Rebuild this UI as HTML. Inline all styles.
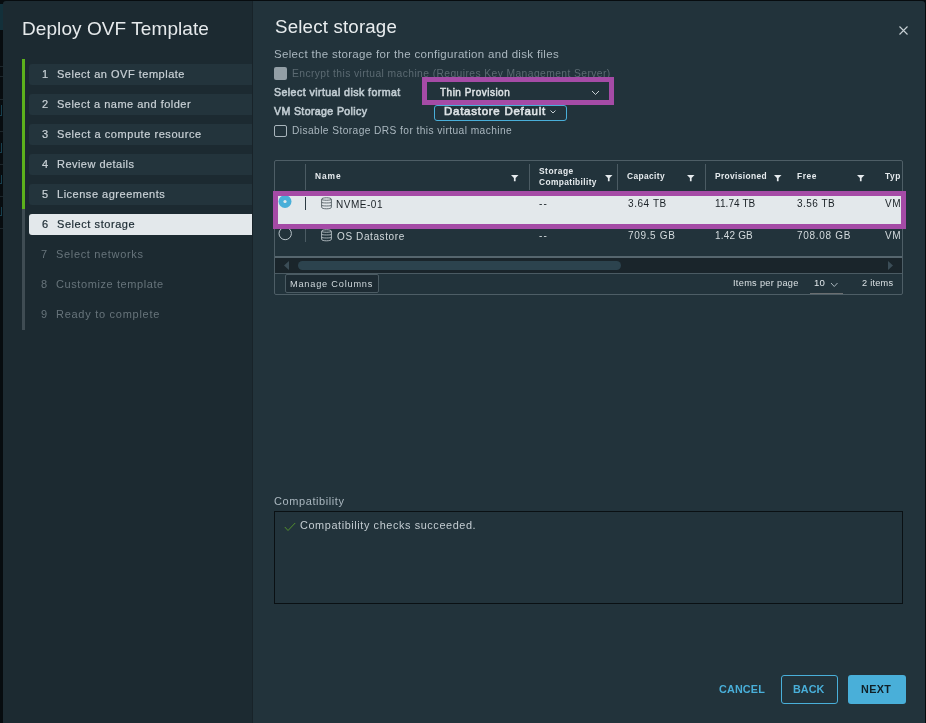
<!DOCTYPE html>
<html><head><meta charset="utf-8"><style>
html,body{margin:0;padding:0;}
body{width:926px;height:723px;overflow:hidden;background:#070c0f;position:relative;font-family:"Liberation Sans",sans-serif;}
.t{position:absolute;white-space:nowrap;line-height:1;will-change:transform;}
.r{position:absolute;}
svg.r{overflow:visible;}
</style></head><body>
<div class="r" style="left:0px;top:4px;width:3px;height:26px;background:#13303a"></div>
<div class="r" style="left:0px;top:66px;width:3px;height:1px;background:#1c262b"></div>
<div class="r" style="left:0px;top:76px;width:3px;height:1px;background:#1c262b"></div>
<div class="r" style="left:0px;top:99px;width:3px;height:1px;background:#1c262b"></div>
<div class="r" style="left:0px;top:131px;width:3px;height:1px;background:#1c262b"></div>
<div class="r" style="left:0px;top:164px;width:3px;height:1px;background:#1c262b"></div>
<div class="r" style="left:0px;top:196px;width:3px;height:1px;background:#1c262b"></div>
<div class="r" style="left:0px;top:228px;width:3px;height:1px;background:#1c262b"></div>
<div class="r" style="left:0px;top:115px;width:2px;height:1px;background:#173f4e"></div>
<div class="r" style="left:1px;top:105px;width:1px;height:11px;background:#173f4e"></div>
<div class="r" style="left:0px;top:152px;width:2px;height:1px;background:#173f4e"></div>
<div class="r" style="left:1px;top:143px;width:1px;height:10px;background:#173f4e"></div>
<div class="r" style="left:0px;top:183px;width:2px;height:1px;background:#173f4e"></div>
<div class="r" style="left:1px;top:175px;width:1px;height:9px;background:#173f4e"></div>
<div class="r" style="left:0px;top:215px;width:2px;height:1px;background:#173f4e"></div>
<div class="r" style="left:1px;top:207px;width:1px;height:9px;background:#173f4e"></div>
<div class="r" style="left:3px;top:1px;width:250px;height:722px;background:#1c2a31;border-top-left-radius:3px"></div>
<div class="r" style="left:252px;top:1px;width:1px;height:722px;background:#182329"></div>
<div class="r" style="left:253px;top:1px;width:672px;height:722px;background:#22333b;border-top-right-radius:3px"></div>
<div class="t" style="left:22.20px;top:19px;font-size:19px;color:#e6eaec;font-weight:normal;letter-spacing:0.078px;">Deploy OVF Template</div>
<div class="r" style="left:22px;top:59px;width:3px;height:150px;background:#5cb11c"></div>
<div class="r" style="left:22px;top:209px;width:3px;height:121px;background:#3f4c53"></div>
<div class="r" style="left:29px;top:64px;width:223px;height:21px;background:#23343c;border-radius:3px 0 0 3px"></div>
<div class="t" style="left:41.58px;top:69px;font-size:11px;color:#c9d1d6;font-weight:normal;letter-spacing:0.000px;-webkit-text-stroke:0.2px #c9d1d6;">1</div>
<div class="t" style="left:56.94px;top:69px;font-size:11px;color:#c9d1d6;font-weight:normal;letter-spacing:0.508px;-webkit-text-stroke:0.2px #c9d1d6;">Select an OVF template</div>
<div class="r" style="left:29px;top:94px;width:223px;height:21px;background:#23343c;border-radius:3px 0 0 3px"></div>
<div class="t" style="left:41.82px;top:99px;font-size:11px;color:#c9d1d6;font-weight:normal;letter-spacing:0.000px;-webkit-text-stroke:0.2px #c9d1d6;">2</div>
<div class="t" style="left:56.94px;top:99px;font-size:11px;color:#c9d1d6;font-weight:normal;letter-spacing:0.492px;-webkit-text-stroke:0.2px #c9d1d6;">Select a name and folder</div>
<div class="r" style="left:29px;top:124px;width:223px;height:21px;background:#23343c;border-radius:3px 0 0 3px"></div>
<div class="t" style="left:41.77px;top:129px;font-size:11px;color:#c9d1d6;font-weight:normal;letter-spacing:0.000px;-webkit-text-stroke:0.2px #c9d1d6;">3</div>
<div class="t" style="left:56.94px;top:129px;font-size:11px;color:#c9d1d6;font-weight:normal;letter-spacing:0.553px;-webkit-text-stroke:0.2px #c9d1d6;">Select a compute resource</div>
<div class="r" style="left:29px;top:154px;width:223px;height:21px;background:#23343c;border-radius:3px 0 0 3px"></div>
<div class="t" style="left:42.07px;top:159px;font-size:11px;color:#c9d1d6;font-weight:normal;letter-spacing:0.000px;-webkit-text-stroke:0.2px #c9d1d6;">4</div>
<div class="t" style="left:56.86px;top:159px;font-size:11px;color:#c9d1d6;font-weight:normal;letter-spacing:0.466px;-webkit-text-stroke:0.2px #c9d1d6;">Review details</div>
<div class="r" style="left:29px;top:184px;width:223px;height:21px;background:#23343c;border-radius:3px 0 0 3px"></div>
<div class="t" style="left:41.83px;top:189px;font-size:11px;color:#c9d1d6;font-weight:normal;letter-spacing:0.000px;-webkit-text-stroke:0.2px #c9d1d6;">5</div>
<div class="t" style="left:56.85px;top:189px;font-size:11px;color:#c9d1d6;font-weight:normal;letter-spacing:0.515px;-webkit-text-stroke:0.2px #c9d1d6;">License agreements</div>
<div class="r" style="left:29px;top:214px;width:223px;height:21px;background:#e3e8eb;border-radius:3px 0 0 3px"></div>
<div class="t" style="left:41.80px;top:219px;font-size:11px;color:#1b2a32;font-weight:normal;letter-spacing:0.000px;-webkit-text-stroke:0.2px #1b2a32;">6</div>
<div class="t" style="left:56.94px;top:219px;font-size:11px;color:#1b2a32;font-weight:normal;letter-spacing:0.565px;-webkit-text-stroke:0.2px #1b2a32;">Select storage</div>
<div class="t" style="left:40.89px;top:249px;font-size:11px;color:#67747b;font-weight:normal;letter-spacing:0.000px;">7</div>
<div class="t" style="left:55.95px;top:249px;font-size:11px;color:#67747b;font-weight:normal;letter-spacing:0.664px;">Select networks</div>
<div class="t" style="left:41.04px;top:279px;font-size:11px;color:#67747b;font-weight:normal;letter-spacing:0.000px;">8</div>
<div class="t" style="left:56.45px;top:279px;font-size:11px;color:#67747b;font-weight:normal;letter-spacing:0.589px;">Customize template</div>
<div class="t" style="left:41.00px;top:309px;font-size:11px;color:#67747b;font-weight:normal;letter-spacing:0.000px;">9</div>
<div class="t" style="left:56.00px;top:309px;font-size:11px;color:#67747b;font-weight:normal;letter-spacing:0.726px;">Ready to complete</div>
<div class="t" style="left:274.87px;top:18px;font-size:18.7px;color:#e9edef;font-weight:normal;letter-spacing:0.182px;">Select storage</div>
<svg class="r" style="left:897px;top:24px" width="13" height="13" viewBox="0 0 13 13"><path d="M2.5 2.5 L10.5 10.5 M10.5 2.5 L2.5 10.5" stroke="#c8d0d4" stroke-width="1.1"/></svg>
<div class="t" style="left:273.77px;top:49px;font-size:11.5px;color:#aab7bf;font-weight:normal;letter-spacing:0.323px;">Select the storage for the configuration and disk files</div>
<div class="r" style="left:274px;top:67px;width:13px;height:13px;background:#939fa6;border-radius:2px"></div>
<div class="t" style="left:291.70px;top:69px;font-size:10.3px;color:#5b6a72;font-weight:normal;letter-spacing:0.410px;">Encrypt this virtual machine (Requires Key Management Server)</div>
<div class="t" style="left:274.17px;top:87px;font-size:10.6px;color:#c1ccd2;font-weight:normal;letter-spacing:0.433px;-webkit-text-stroke:0.6px #c1ccd2;">Select virtual disk format</div>
<div class="r" style="left:422px;top:77px;width:192px;height:28px;border:5px solid #a54ba6;box-sizing:border-box"></div>
<div class="t" style="left:439.66px;top:88px;font-size:10px;color:#dfe4e7;font-weight:normal;letter-spacing:0.489px;-webkit-text-stroke:0.45px #dfe4e7;">Thin Provision</div>
<svg class="r" style="left:591px;top:90px" width="9" height="6" viewBox="0 0 9 6"><path d="M1 1 L4.5 4.5 L8 1" stroke="#c8d0d4" stroke-width="1" fill="none"/></svg>
<div class="t" style="left:274.45px;top:106px;font-size:10.6px;color:#c1ccd2;font-weight:normal;letter-spacing:0.368px;-webkit-text-stroke:0.6px #c1ccd2;">VM Storage Policy</div>
<div class="r" style="left:434px;top:105px;width:133px;height:16px;border:1px solid #49afd9;border-radius:3px;box-sizing:border-box"></div>
<div class="t" style="left:444.48px;top:106px;font-size:11.5px;color:#dfe4e7;font-weight:normal;letter-spacing:0.733px;-webkit-text-stroke:0.6px #dfe4e7;">Datastore Default</div>
<svg class="r" style="left:549px;top:109px" width="9" height="6" viewBox="0 0 9 6"><path d="M1.5 1.5 L4 4 L6.5 1.5" stroke="#c8d0d4" stroke-width="1" fill="none"/></svg>
<div class="r" style="left:274px;top:125px;width:13px;height:12px;border:1px solid #a9b5bc;border-radius:2px;box-sizing:border-box"></div>
<div class="t" style="left:291.66px;top:126px;font-size:10.2px;color:#aab7bf;font-weight:normal;letter-spacing:0.421px;">Disable Storage DRS for this virtual machine</div>
<div class="r" style="left:274px;top:160px;width:629px;height:135px;border:1px solid #4e5e66;border-radius:2px;box-sizing:border-box"></div>
<div class="r" style="left:305px;top:164px;width:1px;height:26px;background:#4b5b63"></div>
<div class="r" style="left:529px;top:164px;width:1px;height:26px;background:#4b5b63"></div>
<div class="r" style="left:617px;top:164px;width:1px;height:26px;background:#4b5b63"></div>
<div class="r" style="left:705px;top:164px;width:1px;height:26px;background:#4b5b63"></div>
<div class="t" style="left:315.00px;top:172px;font-size:8.4px;color:#e6ebee;font-weight:bold;letter-spacing:0.925px;">Name</div>
<div class="t" style="left:538.72px;top:167px;font-size:8.4px;color:#e6ebee;font-weight:bold;letter-spacing:0.000px;letter-spacing:0.5px">Storage</div>
<div class="t" style="left:538.84px;top:178px;font-size:8.4px;color:#e6ebee;font-weight:bold;letter-spacing:0.368px;">Compatibility</div>
<div class="t" style="left:627.24px;top:172px;font-size:8.4px;color:#e6ebee;font-weight:bold;letter-spacing:0.375px;">Capacity</div>
<div class="t" style="left:714.90px;top:172px;font-size:8.4px;color:#e6ebee;font-weight:bold;letter-spacing:0.365px;">Provisioned</div>
<div class="t" style="left:796.60px;top:172px;font-size:8.4px;color:#e6ebee;font-weight:bold;letter-spacing:0.000px;letter-spacing:0.6px">Free</div>
<div class="t" style="left:885.42px;top:172px;font-size:8.4px;color:#e6ebee;font-weight:bold;letter-spacing:0.000px;letter-spacing:0.6px">Typ</div>
<svg class="r" style="left:510.75px;top:174.75px" width="8" height="7" viewBox="0 0 8 7"><path d="M0 0 H7.5 L4.6 3 V6.2 H2.9 V3 Z" fill="#e6ebee"/></svg>
<svg class="r" style="left:604.5px;top:174.75px" width="8" height="7" viewBox="0 0 8 7"><path d="M0 0 H7.5 L4.6 3 V6.2 H2.9 V3 Z" fill="#e6ebee"/></svg>
<svg class="r" style="left:687px;top:174.75px" width="8" height="7" viewBox="0 0 8 7"><path d="M0 0 H7.5 L4.6 3 V6.2 H2.9 V3 Z" fill="#e6ebee"/></svg>
<svg class="r" style="left:774px;top:174.75px" width="8" height="7" viewBox="0 0 8 7"><path d="M0 0 H7.5 L4.6 3 V6.2 H2.9 V3 Z" fill="#e6ebee"/></svg>
<svg class="r" style="left:857px;top:174.75px" width="8" height="7" viewBox="0 0 8 7"><path d="M0 0 H7.5 L4.6 3 V6.2 H2.9 V3 Z" fill="#e6ebee"/></svg>
<div class="r" style="left:278px;top:196px;width:623px;height:28px;background:#e3e8eb"></div>
<div class="r" style="left:273px;top:191px;width:633px;height:38px;border:5px solid #a54ba6;box-sizing:border-box"></div>
<svg class="r" style="left:278px;top:195px" width="14" height="14" viewBox="0 0 14 14"><circle cx="7" cy="6.5" r="6.5" fill="#49afd9"/><circle cx="7" cy="6.5" r="1.6" fill="#e3e8eb"/></svg>
<div class="r" style="left:305px;top:197px;width:1px;height:13px;background:#2b3a42"></div>
<svg class="r" style="left:320.5px;top:196.5px" width="11" height="13" viewBox="0 0 11 13"><path d="M0.6 2.2 C0.6 0.3 10.4 0.3 10.4 2.2 V10.3 C10.4 12.3 0.6 12.3 0.6 10.3 Z M0.6 2.2 C0.6 3.6 10.4 3.6 10.4 2.2 M0.6 5.3 C0.6 6.2 10.4 6.2 10.4 5.3 M0.6 8.3 C0.6 9.2 10.4 9.2 10.4 8.3" fill="none" stroke="#4a555b" stroke-width="0.85"/></svg>
<div class="t" style="left:335.99px;top:200px;font-size:10px;color:#1a2126;font-weight:normal;letter-spacing:0.523px;">NVME-01</div>
<div class="t" style="left:538.55px;top:199px;font-size:10px;color:#1a2126;font-weight:normal;letter-spacing:0.000px;letter-spacing:1.2px">--</div>
<div class="t" style="left:627.79px;top:199px;font-size:10px;color:#1a2126;font-weight:normal;letter-spacing:0.570px;">3.64 TB</div>
<div class="t" style="left:715.00px;top:199px;font-size:10px;color:#1a2126;font-weight:normal;letter-spacing:0.087px;">11.74 TB</div>
<div class="t" style="left:797.29px;top:199px;font-size:10px;color:#1a2126;font-weight:normal;letter-spacing:0.470px;">3.56 TB</div>
<div class="t" style="left:885.31px;top:199px;font-size:10px;color:#1a2126;font-weight:normal;letter-spacing:0.000px;letter-spacing:0.5px">VM</div>
<svg class="r" style="left:278px;top:228px" width="14" height="14" viewBox="0 0 14 14"><circle cx="7.2" cy="5.5" r="6.2" fill="none" stroke="#b9c4ca" stroke-width="1"/></svg>
<div class="r" style="left:305px;top:229px;width:1px;height:13px;background:#4b5b63"></div>
<svg class="r" style="left:320.5px;top:229px" width="11" height="13" viewBox="0 0 11 13"><path d="M0.6 2.2 C0.6 0.3 10.4 0.3 10.4 2.2 V10.3 C10.4 12.3 0.6 12.3 0.6 10.3 Z M0.6 2.2 C0.6 3.6 10.4 3.6 10.4 2.2 M0.6 5.3 C0.6 6.2 10.4 6.2 10.4 5.3 M0.6 8.3 C0.6 9.2 10.4 9.2 10.4 8.3" fill="none" stroke="#c0c9ce" stroke-width="0.85"/></svg>
<div class="t" style="left:336.55px;top:232px;font-size:10px;color:#d3dadd;font-weight:normal;letter-spacing:0.607px;">OS Datastore</div>
<div class="t" style="left:538.55px;top:231px;font-size:10px;color:#d3dadd;font-weight:normal;letter-spacing:0.000px;letter-spacing:1.2px">--</div>
<div class="t" style="left:627.73px;top:231px;font-size:10px;color:#d3dadd;font-weight:normal;letter-spacing:0.662px;">709.5 GB</div>
<div class="t" style="left:715.00px;top:231px;font-size:10px;color:#d3dadd;font-weight:normal;letter-spacing:0.184px;">1.42 GB</div>
<div class="t" style="left:797.23px;top:231px;font-size:10px;color:#d3dadd;font-weight:normal;letter-spacing:0.710px;">708.08 GB</div>
<div class="t" style="left:885.31px;top:231px;font-size:10px;color:#d3dadd;font-weight:normal;letter-spacing:0.000px;letter-spacing:0.5px">VM</div>
<div class="r" style="left:903px;top:161px;width:22px;height:95px;background:#22333b"></div>
<div class="r" style="left:273px;top:191px;width:633px;height:38px;border:5px solid #a54ba6;box-sizing:border-box;"></div>
<div class="r" style="left:275px;top:256px;width:627px;height:2px;background:#56666e"></div>
<div class="r" style="left:275px;top:258px;width:627px;height:15px;background:#1a252b"></div>
<div class="r" style="left:275px;top:273px;width:627px;height:1px;background:#4b5b63"></div>
<svg class="r" style="left:283px;top:261px" width="7" height="10" viewBox="0 0 7 10"><path d="M6 0 V9 L1 4.5 Z" fill="#3b4d57"/></svg>
<svg class="r" style="left:888px;top:261px" width="7" height="10" viewBox="0 0 7 10"><path d="M0 0 V9 L5 4.5 Z" fill="#3b4d57"/></svg>
<div class="r" style="left:298px;top:261px;width:323px;height:9px;background:#2c434e;border-radius:5px"></div>
<div class="r" style="left:285px;top:274px;width:94px;height:19px;background:#1d2b33;border:1px solid #4b5b63;border-radius:2px;box-sizing:border-box"></div>
<div class="t" style="left:290.31px;top:280px;font-size:9.2px;color:#cfd7db;font-weight:normal;letter-spacing:0.795px;">Manage Columns</div>
<div class="t" style="left:732.54px;top:279px;font-size:9.2px;color:#d9e0e3;font-weight:normal;letter-spacing:0.313px;">Items per page</div>
<div class="t" style="left:813.86px;top:278px;font-size:9.6px;color:#e0e6e9;font-weight:normal;letter-spacing:0.082px;">10</div>
<svg class="r" style="left:830px;top:282px" width="9" height="6" viewBox="0 0 9 6"><path d="M1 1 L4.25 4.5 L7.5 1" stroke="#a9b5bc" stroke-width="1" fill="none"/></svg>
<div class="r" style="left:810px;top:293px;width:33px;height:1px;background:#6a6e70"></div>
<div class="t" style="left:861.93px;top:279px;font-size:9.2px;color:#d9e0e3;font-weight:normal;letter-spacing:0.234px;">2 items</div>
<div class="t" style="left:274.25px;top:496px;font-size:11px;color:#aab7bf;font-weight:normal;letter-spacing:0.585px;">Compatibility</div>
<div class="r" style="left:274px;top:511px;width:629px;height:93px;border:1px solid #0a1013;box-sizing:border-box"></div>
<svg class="r" style="left:284px;top:522px" width="12" height="10" viewBox="0 0 12 10"><path d="M0.8 5 L4 8.5 L11.2 1" stroke="#55932c" stroke-width="0.95" fill="none"/></svg>
<div class="t" style="left:300.17px;top:520px;font-size:10.9px;color:#c3ccd1;font-weight:normal;letter-spacing:0.588px;">Compatibility checks succeeded.</div>
<div class="t" style="left:718.85px;top:684px;font-size:10.8px;color:#49afd9;font-weight:bold;letter-spacing:0.149px;">CANCEL</div>
<div class="r" style="left:781px;top:675px;width:57px;height:29px;border:1px solid #49afd9;border-radius:3px;box-sizing:border-box"></div>
<div class="t" style="left:793.35px;top:684px;font-size:10.8px;color:#49afd9;font-weight:bold;letter-spacing:0.036px;">BACK</div>
<div class="r" style="left:848px;top:675px;width:58px;height:29px;background:#49afd9;border-radius:3px"></div>
<div class="t" style="left:861.15px;top:684px;font-size:10.8px;color:#102027;font-weight:bold;letter-spacing:0.361px;">NEXT</div>
</body></html>
